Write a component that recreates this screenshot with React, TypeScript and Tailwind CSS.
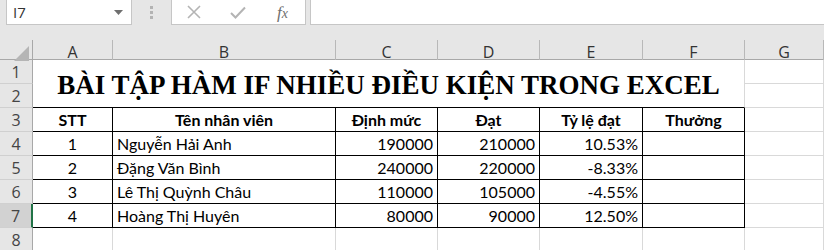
const cols = ["A", "B", "C", "D", "E", "F", "G"];

const rows = [
  { stt: "1", name: "Nguyễn Hải Anh", dm: "190000", dat: "210000", tl: "10.53%" },
  { stt: "2", name: "Đặng Văn Bình", dm: "240000", dat: "220000", tl: "-8.33%" },
  { stt: "3", name: "Lê Thị Quỳnh Châu", dm: "110000", dat: "105000", tl: "-4.55%" },
  { stt: "4", name: "Hoàng Thị Huyên", dm: "80000", dat: "90000", tl: "12.50%" },
];

const grid = "grid grid-cols-[33px_80px_223px_102px_102px_103px_102px_79px]";
const rowHead =
  "h-[24px] bg-[#e6e6e6] border-r border-r-[#a8a8a8] border-b border-b-[#d0d0d0] flex items-center justify-center text-[16px] text-[#444] font-['Open_Sans',sans-serif]";
const gridCell = "h-[24px] bg-white border-r border-b border-[#d9d9d9]";
const tCell =
  "h-[24px] bg-white border-r border-b border-black flex items-end pb-[1px] px-[4px] text-[16px] leading-[20px] text-black whitespace-nowrap";

const App = () => {
  return (
    <div className="w-[824px] h-[250px] overflow-hidden bg-white font-['Lato',sans-serif]">
      {/* formula bar */}
      <div className="h-[37px] bg-[#e6e6e6] flex items-start">
        <div className="ml-[6px] w-[126px] h-[25px] bg-white border border-t-0 border-[#c6c6c6] flex items-center justify-between pl-[6px] pr-[8px]">
          <span className="text-[15px] text-[#333] font-['Open_Sans',sans-serif]">I7</span>
          <svg width="9" height="5" viewBox="0 0 9 5">
            <path d="M0 0 L9 0 L4.5 5 Z" fill="#6f6f6f" />
          </svg>
        </div>
        <div className="w-[39px] h-[25px] flex flex-col items-center justify-center gap-[2px]">
          <span className="w-[3px] h-[3px] bg-[#b3b3b3]" />
          <span className="w-[3px] h-[3px] bg-[#b3b3b3]" />
          <span className="w-[3px] h-[3px] bg-[#b3b3b3]" />
        </div>
        <div className="w-[135px] h-[25px] bg-white border border-t-0 border-[#c6c6c6] flex items-center">
          <svg className="ml-[15px]" width="14" height="14" viewBox="0 0 14 14">
            <path d="M1 1 L13 13 M13 1 L1 13" stroke="#b4b4b4" strokeWidth="1.6" />
          </svg>
          <svg className="ml-[29px]" width="16" height="13" viewBox="0 0 16 13">
            <path d="M1 7 L5.5 11.5 L15 1.5" stroke="#b4b4b4" strokeWidth="2" fill="none" />
          </svg>
          <span className="ml-[31px] text-[17px] italic text-[#6f6f6f] font-['Liberation_Serif',serif] leading-none">
            f<span className="text-[14px]">x</span>
          </span>
        </div>
        <div className="ml-[4px] flex-1 h-[25px] bg-white border border-t-0 border-r-0 border-[#c6c6c6]" />
      </div>

      {/* column headers */}
      <div className={`${grid} h-[23px] bg-[#e6e6e6] border-b border-[#a8a8a8]`}>
        <div className="relative border-r border-[#a8a8a8] mt-[3px]">
          <svg className="absolute right-[3px] bottom-[3px]" width="15" height="15" viewBox="0 0 15 15">
            <path d="M15 0 L15 15 L0 15 Z" fill="#b5b5b5" />
          </svg>
        </div>
        {cols.map((c) => (
          <div
            key={c}
            className="border-r border-[#b8b8b8] mt-[3px] flex items-center justify-center text-[16px] text-[#333] font-['Open_Sans',sans-serif]"
          >
            {c}
          </div>
        ))}
      </div>

      {/* sheet body */}
      <div className={grid}>
        {/* rows 1-2 with merged title */}
        <div className={rowHead}>1</div>
        <div className="col-span-6 row-span-2 h-[48px] bg-white border-r border-r-[#d9d9d9] border-b border-b-black flex items-center justify-center">
          <span className="font-['Liberation_Serif',serif] font-bold text-[27px] leading-none text-black whitespace-nowrap mt-[4px]">
            BÀI TẬP HÀM IF NHIỀU ĐIỀU KIỆN TRONG EXCEL
          </span>
        </div>
        <div className={gridCell} />
        <div className={rowHead}>2</div>
        <div className={gridCell} />

        {/* header row */}
        <div className={rowHead}>3</div>
        {["STT", "Tên nhân viên", "Định mức", "Đạt", "Tỷ lệ đạt", "Thưởng"].map((h) => (
          <div key={h} className={`${tCell} justify-center font-bold bg-[#e2efda]`}>
            {h}
          </div>
        ))}
        <div className={gridCell} />

        {rows.map((r, i) => (
          <div key={r.stt} className="contents">
            <div
              className={
                i === 3
                  ? "h-[24px] bg-[#d2d2d2] border-r-2 border-r-[#217346] border-b border-b-[#d0d0d0] flex items-center justify-center text-[16px] text-[#444] font-['Open_Sans',sans-serif]"
                  : rowHead
              }
            >
              {i + 4}
            </div>
            <div className={`${tCell} justify-center`}>{r.stt}</div>
            <div className={tCell}>{r.name}</div>
            <div className={`${tCell} justify-end`}>{r.dm}</div>
            <div className={`${tCell} justify-end`}>{r.dat}</div>
            <div className={`${tCell} justify-end`}>{r.tl}</div>
            <div className={tCell} />
            <div className={gridCell} />
          </div>
        ))}

        <div className={rowHead}>8</div>
        <div className={gridCell} />
        <div className={gridCell} />
        <div className={gridCell} />
        <div className={gridCell} />
        <div className={gridCell} />
        <div className={gridCell} />
        <div className={gridCell} />
      </div>
    </div>
  );
};

export default App;
